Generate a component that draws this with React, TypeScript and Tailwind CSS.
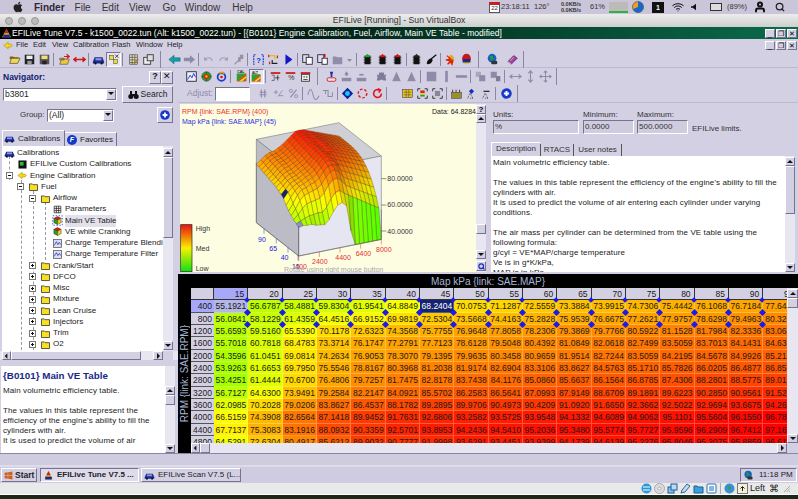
import type { ReactNode } from "react"
import { FaApple, FaWindows } from "react-icons/fa"
import { FiSearch, FiUser, FiWifi } from "react-icons/fi"

const bevel = "border border-t-white border-l-white border-r-[#77738f] border-b-[#77738f] bg-[#d4d0e4]"
const sunken = "border border-t-[#77738f] border-l-[#77738f] border-r-white border-b-white"

const grid = <path d="M3 3h9v9H3z M3 6h9 M3 9h9 M6 3v9 M9 3v9" fill="#fff" stroke="#222" />
const chip = (c: string) => (
  <>
    <rect x="4" y="3" width="7" height="10" fill="#111" />
    <path d="M3 5h1M3 8h1M3 11h1M11 5h1M11 8h1M11 11h1" stroke="#333" />
    <path d="M7.500 1l3.500 4h-7z" fill={c} />
  </>
)

const icons: Record<string, ReactNode> = {
  open: <><path d="M2 4h4l1 1h5v2H2z" fill="#8a6a10" /><path d="M2 12l2-6h10l-3 6z" fill="#f2d84a" stroke="#333" strokeWidth=".7" /></>,
  save: <><rect x="2" y="2" width="11" height="11" fill="#222" /><rect x="4" y="3" width="7" height="4" fill="#eee" /><rect x="5" y="9" width="5" height="4" fill="#999" /></>,
  saveall: <><rect x="2" y="2" width="11" height="11" fill="#555" /><rect x="4" y="3" width="7" height="4" fill="#f4e070" /><rect x="5" y="9" width="5" height="4" fill="#222" /></>,
  folderx: <><path d="M2 13l2-6h9l-2 6z M2 6h5v2H2z" fill="#ecc83a" stroke="#333" strokeWidth=".6" /><path d="M7 4h6M10 1.500l3 2.500-3 2.500" stroke="#d01818" fill="none" strokeWidth="1.300" /></>,
  arrows: <path d="M1 7.500h13M4 5l-3 2.500L4 10M11 5l3 2.500-3 2.500" stroke="#d01818" fill="none" strokeWidth="1.800" />,
  car: <><path d="M1 10l2-5h9l2 5v2H1z" fill="#1a2a90" /><rect x="4" y="6" width="7" height="2.500" fill="#8898e0" /><circle cx="4" cy="12" r="1.300" fill="#111" /><circle cx="11" cy="12" r="1.300" fill="#111" /></>,
  picks: <><rect x="2" y="3" width="5" height="5" fill="#ecd93a" stroke="#333" strokeWidth=".6" /><rect x="7" y="8" width="5" height="5" fill="#ecd93a" stroke="#333" strokeWidth=".6" /><path d="M9 2l4 4M13 2l-4 4" stroke="#222" /></>,
  tablepen: <><path d="M3 2h9v11H3z M3 5h9 M3 8h9 M3 11h9 M6 2v11 M9 2v11" fill="#e8e8c0" stroke="#333" strokeWidth=".7" /><path d="M8 12l5-5" stroke="#c07010" strokeWidth="1.400" /></>,
  windows: <><rect x="2" y="5" width="8" height="8" fill="#eee" stroke="#333" /><rect x="6" y="2" width="7" height="7" fill="#ddd" stroke="#333" /></>,
  left: <path d="M1 7.500L7 2.500v3h7v4H7v3z" fill="#12a0a8" stroke="#0a5058" strokeWidth=".5" />,
  right: <path d="M14 7.500L8 2.500v3H1v4h7v3z" fill="#8e8aa8" />,
  undo: <path d="M3 5v3h3M3 8c2-3 7-4 9 1" fill="none" stroke="#a09cb8" strokeWidth="1.300" />,
  redo: <path d="M12 5v3H9M12 8c-2-3-7-4-9 1" fill="none" stroke="#a09cb8" strokeWidth="1.300" />,
  wrench: <path d="M2 13l5-5V5h2V2h4v5h-3v3H7l-3 3z" fill="#96929f" />,
  help: <><path d="M4 2H2v11h2M11 2h2v11h-2" fill="none" stroke="#1030d0" strokeDasharray="2 1" strokeWidth="1.300" /><text x="5" y="11" fontSize="9" fontWeight="700" fill="#1030d0">?</text></>,
  sync: <><path d="M3 3h6v4" fill="none" stroke="#e0c010" strokeWidth="1.500" /><path d="M12 12H6V8" fill="none" stroke="#202020" strokeWidth="1.300" /><path d="M2 2v3M12 3v3M3 10v3" stroke="#e01818" strokeWidth="1.500" /></>,
  play: <path d="M4 1.500l8 6-8 6z" fill="#1414c8" />,
  copy: <><rect x="2" y="2" width="7" height="9" fill="#dde" stroke="#223" /><rect x="6" y="5" width="7" height="8" fill="#fff" stroke="#223" /></>,
  copyred: <><rect x="2" y="2" width="7" height="9" fill="#dde" stroke="#223" /><rect x="7" y="6" width="6" height="7" fill="#fff" stroke="#223" /><path d="M10 1v4" stroke="#d01818" strokeWidth="2" /></>,
  paste: <path d="M2 4h4l1 1h6v8H2z" fill="#918da8" />,
  chipg: chip("#10b020"),
  chipr: chip("#e01010"),
  chipk: chip("#222"),
  guitar: <><path d="M7 7l6-5" stroke="#111" strokeWidth="1.500" /><path d="M2 12c0-3 2-5 5-6l2 2c-1 3-3 5-6 5z" fill="#111" /></>,
  star: <><path d="M7 2a6 6 0 0 1 0 11 6 6 0 0 1 0-11" fill="#e8a820" /><path d="M2 3l5 4-6 1 6 1-4 4 5-4 0 5 1-6" stroke="#d82010" fill="none" strokeWidth="1.400" /></>,
  carred: <><circle cx="7.500" cy="6" r="5" fill="#c81818" /><path d="M3 7h9v4H3z" fill="#1a2a90" /><path d="M4 12h7" stroke="#e8c820" strokeWidth="1.500" /></>,
  globe: <><circle cx="7" cy="6" r="5" fill="#1860c0" /><path d="M4 3l4 1 1 3-3 2z" fill="#20a030" /><rect x="6" y="9" width="7" height="4" rx="1.500" fill="#333" /></>,
  book: <><path d="M2 10l7-7 4 3-7 7z" fill="#a040b0" stroke="#401850" strokeWidth=".7" /><path d="M5 9l4-4" stroke="#f4d040" /><path d="M2 10l4 3" stroke="#eee" /></>,
  chart: <><rect x="2" y="2" width="11" height="11" fill="#eef" stroke="#222" /><path d="M3 11l3-5 2 3 2-5 2 4" stroke="#1030c0" fill="none" /></>,
  cube: <><circle cx="7.500" cy="7.500" r="5.500" fill="#2aa030" stroke="#222" strokeWidth=".5" /><path d="M7.500 2v11M2 7.500h11" stroke="#222" strokeWidth=".5" /><circle cx="7.500" cy="7.500" r="3" fill="#e02010" /><circle cx="7.500" cy="7.500" r="1.300" fill="#f0d020" /></>,
  ring: <><circle cx="7.500" cy="8" r="4.500" fill="none" stroke="#1840d0" strokeWidth="2" /><path d="M5 4a4.500 4.500 0 0 1 6 0" fill="none" stroke="#e8a010" strokeWidth="2" /><circle cx="7.500" cy="8" r="1.500" fill="#d01818" /></>,
  cal: <><rect x="2" y="4" width="11" height="9" fill="#30a030" /><path d="M2 13L13 4v9z" fill="#e05010" /><path d="M5 13L13 7v2l-5 4z" fill="#f0e030" /><text x="2.500" y="3.800" fontSize="4" fontWeight="700" fill="#222">CAL</text></>,
  alt: <><rect x="2" y="4" width="11" height="9" fill="#30a030" /><path d="M2 13L13 4v9z" fill="#e05010" /><path d="M5 13L13 7v2l-5 4z" fill="#f0e030" /><text x="2.500" y="3.800" fontSize="4" fontWeight="700" fill="#222">ALT</text></>,
  pm: <><rect x="2" y="2.500" width="11" height="2" fill="#c81818" /><path d="M3 6h3v6H3" stroke="#444" fill="none" strokeWidth=".8" /><path d="M7 9h5M10 6v6" stroke="#333" /></>,
  pc: <><rect x="2" y="2.500" width="11" height="2" fill="#c81818" /><text x="5" y="12" fontSize="8" fill="#333">%</text></>,
  calc: <><rect x="2" y="2.500" width="11" height="2" fill="#c81818" /><rect x="3" y="5" width="9" height="8" fill="#eee" stroke="#333" /><path d="M5 8h2M9 7v2M5 11h5" stroke="#333" /></>,
  anvil: <><path d="M5.500 2h4l-1 3.500v2.500h-2V5.500z" fill="#2030b0" /><rect x="2.500" y="9" width="10" height="4" rx="1.500" fill="#f0e0e0" stroke="#c81818" /></>,
  upbar: <><rect x="2" y="9" width="11" height="4" fill="#8e8aa8" /><path d="M7.500 2v5M5.500 4.500h4" stroke="#8e8aa8" strokeWidth="2" /></>,
  downbar: <><rect x="2" y="9" width="11" height="4" fill="#8e8aa8" /><path d="M5 5.500h5" stroke="#8e8aa8" strokeWidth="2" /></>,
  bug: <path d="M5 3h5l1 3 2-1-1 3 1 4h-3l-2.500-1L5 12H2l1-4-1-3 2 1z" fill="#7e7a98" />,
  tri: <path d="M7.500 2l5 11h-10z" fill="#8e8aa8" />,
  square: <rect x="2" y="2" width="11" height="11" fill="#8e8aa8" />,
  vbar: <rect x="6" y="1" width="3" height="13" fill="#8e8aa8" />,
  hbar: <rect x="1" y="6" width="13" height="3" fill="#8e8aa8" />,
  stack1: <><rect x="2" y="2" width="6" height="6" fill="#aaa6c0" /><rect x="6" y="6" width="7" height="7" fill="#8e8aa8" /></>,
  stack2: <><rect x="2" y="2" width="7" height="7" fill="#8e8aa8" /><rect x="8" y="7" width="5" height="6" fill="#7e7a98" /></>,
  ew: <path d="M1 7.500h13M4 5l-3 2.500L4 10M11 5l3 2.500-3 2.500" stroke="#8e8aa8" fill="none" strokeWidth="1.300" />,
  ns: <path d="M7.500 1v13M5 4l2.500-3L10 4M5 11l2.500 3 2.500-3" stroke="#8e8aa8" fill="none" strokeWidth="1.300" />,
  move: <path d="M1 7.500h13M7.500 1v13M3 5.500l-2 2 2 2M12 5.500l2 2-2 2M5.500 3l2-2 2 2M5.500 12l2 2 2-2" stroke="#8e8aa8" fill="none" strokeWidth="1.200" />,
  hash: <path d="M5 3v9M9 3v9M3 6h8M3 9h8" stroke="#8e8aa8" strokeWidth="1.300" />,
  plusminus: <><path d="M2 6h5M4.500 3.500v5" stroke="#8e8aa8" /><path d="M8 10h5M7 11l5-7" stroke="#8e8aa8" /></>,
  percent: <><path d="M11 3l-7 9" stroke="#8e8aa8" strokeWidth="1.300" /><circle cx="4.500" cy="4.500" r="1.800" fill="none" stroke="#8e8aa8" /><circle cx="10.500" cy="10.500" r="1.800" fill="none" stroke="#8e8aa8" /></>,
  wave: <path d="M1 9c2-8 4-8 6 0s4 6 7 1" fill="none" stroke="#8e8aa8" strokeWidth="1.200" />,
  pulse: <path d="M1 4h6v7h5M4 4v4M12 11V6" fill="none" stroke="#8e8aa8" strokeWidth="1.200" />,
  target: <><path d="M7.500 1l6.500 6.500-6.500 6.500L1 7.500z" fill="#1020a0" /><circle cx="7.500" cy="7.500" r="2.800" fill="#18c8f0" /></>,
  dashc: <circle cx="7.500" cy="7.500" r="5" fill="none" stroke="#e01818" strokeWidth="1.600" strokeDasharray="3 2" />,
  refresh: <path d="M12 7.500a4.500 4.500 0 1 1-2-3.700M8 2l3 1.500-2 3" fill="none" stroke="#e01818" strokeWidth="1.800" />,
  gridc: <><rect x="2" y="3" width="11" height="9" fill="#e8c020" stroke="#333" strokeWidth=".6" /><path d="M3 6h9M3 9h9M6 3v9M9 3v9" stroke="#333" strokeWidth=".5" /></>,
  fr1: <><path d="M2 5V2h3M10 2h3v3M13 10v3h-3M5 13H2v-3" stroke="#222" fill="none" /><rect x="5" y="4" width="5" height="3" fill="#e02010" /><rect x="5" y="7" width="5" height="2" fill="#e8d020" /><rect x="5" y="9" width="5" height="2" fill="#20a030" /></>,
  fr2: <><path d="M2 5V2h3M10 2h3v3M13 10v3h-3M5 13H2v-3" stroke="#222" fill="none" /><rect x="4.500" y="4.500" width="6" height="6" fill="#889" /></>,
  tbl: <><path d="M3 3v3M7 3v3M11 3v3" stroke="#333" /><rect x="2" y="6" width="11" height="7" fill="#98902a" stroke="#333" strokeWidth=".6" /></>,
  pin1: <><path d="M3 13l3-6 3 6M9 13h-4" stroke="#333" fill="none" strokeDasharray="1 1" /><path d="M7.500 2l3 3-3 3-3-3z" fill="#1030c0" /></>,
  pin2: <><path d="M3 13l3-6 3 6M9 13h-4" stroke="#333" fill="none" strokeDasharray="1 1" /><path d="M4 5h7" stroke="#333" strokeWidth="1.500" /></>,
  plus: <><circle cx="7.500" cy="7.500" r="6" fill="#1438c8" /><path d="M4.500 7.500h6M7.500 4.500v6" stroke="#fff" strokeWidth="2.200" /></>,
  arrow: <path d="M1 7.500L7 3v2.500h4l2 2-2 2H7V12z" fill="#f4d818" stroke="#806010" strokeWidth=".5" />,
  folder: <><path d="M2 4h4l1 1h6v8H2z" fill="#f6e020" stroke="#222" /></>,
  wcube: <><path d="M7.500 2l5 2.500-5 2.500-5-2.500z" fill="#d81818" stroke="#222" strokeWidth=".5" /><path d="M2.500 4.500l5 2.500v6l-5-2.500z" fill="#20a020" stroke="#222" strokeWidth=".5" /><path d="M12.500 4.500l-5 2.500v6l5-2.500z" fill="#e8c810" stroke="#222" strokeWidth=".5" /></>,
  selcube: <><rect x="1" y="1" width="13" height="13" fill="none" stroke="#1030e0" strokeDasharray="2 2" /><path d="M7.500 2l5 2.500-5 2.500-5-2.500z" fill="#d81818" stroke="#222" strokeWidth=".5" /><path d="M2.500 4.500l5 2.500v6l-5-2.500z" fill="#20a020" stroke="#222" strokeWidth=".5" /><path d="M12.500 4.500l-5 2.500v6l5-2.500z" fill="#e8c810" stroke="#222" strokeWidth=".5" /></>,
  grid,
  curve: <><rect x="2" y="2" width="11" height="11" fill="#dde" stroke="#555" /><path d="M3 10l3-5 2 4 2-3 2 3" stroke="#1030c0" fill="none" /></>,
  cust: <><rect x="2" y="2" width="11" height="11" fill="#111" /><rect x="4" y="4" width="5" height="5" fill="#20c030" /></>,
  tune: <><path d="M7.500 1.500l6 11h-12z" fill="#e8c020" /><path d="M7.500 1.500l3 5.500H4.500z" fill="#c02020" /><path d="M3 9h9v4H3z" fill="#1a2a90" /></>,
}

function Ico({ n }: { n: string }) {
  return (
    <svg className="w-[13px] h-[13px] mx-[1px] shrink-0" viewBox="0 0 15 15">
      {icons[n]}
    </svg>
  )
}

// icon small enough for the tree rows
function Mini({ n }: { n: string }) {
  return (
    <svg className="w-[11px] h-[11px] shrink-0" viewBox="0 0 15 15">
      {icons[n]}
    </svg>
  )
}

function Tool({ items }: { items: string[] }) {
  return (
    <>
      {items.map((it, i) => {
        if (it === "|") return <span key={i} className="w-[4.500px] h-[13px] border-l border-[#8a86a4] translate-x-[1px] shrink-0" />
        if (it === "_") return <span key={i} className="w-[5px] shrink-0" />
        if (it === "||") return <span key={i} className="w-[11px] h-[17px] border-l border-[#8a86a4] translate-x-[4px] shrink-0" />
        if (it === "drop")
          return (
            <svg key={i} className="w-[10px] h-[15px] shrink-0" viewBox="0 0 10 15">
              <path d="M2 7h5l-2.500 3z" fill="#8e8aa8" />
            </svg>
          )
        if (it.startsWith("*"))
          return (
            <span key={i} className="w-[15px] h-[15px] shrink-0 bg-[#e8e6f0] border border-t-[#77738f] border-l-[#77738f] border-r-white border-b-white flex items-center justify-center">
              <svg className="w-[12px] h-[12px]" viewBox="0 0 15 15">{icons[it.slice(1)]}</svg>
            </span>
          )
        return <Ico key={i} n={it} />
      })}
    </>
  )
}

function Arrow({ dir }: { dir: "up" | "down" | "left" | "right" }) {
  const d = { up: "M1 5l3-3 3 3z", down: "M1 2l3 3 3-3z", left: "M5 1L2 4l3 3z", right: "M3 1l3 3-3 3z" }[dir]
  return (
    <svg className="w-[8px] h-[8px]" viewBox="0 0 8 8">
      <path d={d} fill="#111" />
    </svg>
  )
}

function Sb({ dir, className = "w-full h-[9px]" }: { dir: "up" | "down" | "left" | "right"; className?: string }) {
  return (
    <div className={`${bevel} ${className} shrink-0 flex items-center justify-center`}>
      <Arrow dir={dir} />
    </div>
  )
}

function WinBtns({ className = "" }: { className?: string }) {
  return (
    <div className={`flex gap-[1px] ${className}`}>
      {["_", "❐", "✕"].map((c) => (
        <span key={c} className={`${bevel} w-[10px] h-[9px] flex items-center justify-center text-[7px] leading-none text-black`}>
          {c}
        </span>
      ))}
    </div>
  )
}

function MacMenu() {
  return (
    <div className="h-[14px] shrink-0 bg-[#cbc5da] flex items-center text-[#2a2838] relative">
      <FaApple className="ml-[13px] w-[10px] h-[12px] text-[#222]" />
      <span className="ml-[11px] text-[10px] font-bold">Finder</span>
      <span className="ml-[10px] text-[10px] text-[#333]">File</span>
      <span className="ml-[11px] text-[10px] text-[#333]">Edit</span>
      <span className="ml-[10px] text-[10px] text-[#333]">View</span>
      <span className="ml-[12px] text-[10px] text-[#333]">Go</span>
      <span className="ml-[9px] text-[10px] text-[#333]">Window</span>
      <span className="ml-[12px] text-[10px] text-[#333]">Help</span>
      <div className="ml-auto mr-[13px] flex items-center text-[7.500px] text-[#333] whitespace-nowrap">
        <span className="w-[11px] h-[11px] bg-white border border-[#555] border-t-[3px] border-t-[#c82020] text-[6px] leading-none text-center">22</span>
        <span className="ml-[1px] w-[27px]">23:18:11</span>
        <span className="ml-[6px] w-[13px]">126°</span>
        <span className="ml-[14px] w-[22px] flex flex-col text-[5.500px] leading-[6px] font-bold">
          <span>0.0KB/s</span>
          <span>0.0KB/s</span>
        </span>
        <span className="ml-[7px] w-[12px]">61%</span>
        <span className="ml-[7px] w-[19px] h-[11px] bg-[#bdbbb8] border-b-2 border-[#30b040]" />
        <svg className="ml-[4px] w-[12px] h-[12px]" viewBox="0 0 12 12">
          <circle cx="6" cy="6" r="5.500" fill="#f0a020" stroke="#223" strokeWidth=".5" />
          <path d="M6 6V.5A5.500 5.500 0 0 1 6 11.500 5.500 5.500 0 0 1 1 8z" fill="#1868c8" />
        </svg>
        <span className="ml-[8px] w-[12px] h-[11px] bg-[#111] text-white text-[7px] font-bold leading-[11px] text-center">1</span>
        <FiWifi className="ml-[8px] w-[12px] h-[12px] text-[#111]" />
        <svg className="ml-[7px] w-[5px] h-[8px]" viewBox="0 0 6 8">
          <path d="M0 3h2l4-3v8L2 5H0z" fill="#111" />
        </svg>
        <span className="ml-[14px] w-[12px] h-[8px] border border-[#333] bg-[#ddd]" />
        <span className="ml-[5px] w-[19px]">(89%)</span>
        <FiUser className="ml-[8px] w-[12px] h-[12px] text-[#111]" strokeWidth={4} />
        <FiSearch className="ml-[9px] w-[10px] h-[10px] text-[#222]" strokeWidth={3} />
      </div>
    </div>
  )
}

function TitleBars() {
  return (
    <>
      <div className="h-[13px] shrink-0 bg-gradient-to-b from-[#ececec] to-[#cfcfcf] flex items-center relative">
        <div className="flex gap-[5px] ml-[5px]">
          <span className="w-[8px] h-[8px] rounded-full bg-[#bbb] border border-[#999]" />
          <span className="w-[8px] h-[8px] rounded-full bg-[#bbb] border border-[#999]" />
          <span className="w-[8px] h-[8px] rounded-full bg-[#bbb] border border-[#999]" />
        </div>
        <span className="absolute inset-x-0 text-center text-[8.600px] text-[#333]">EFILive [Running] - Sun VirtualBox</span>
      </div>
      <div className="h-[12px] shrink-0 bg-gradient-to-r from-black via-[#04301f] to-[#0b6c4c] flex items-center text-white text-[8.500px] tracking-[.03px] whitespace-nowrap">
        <span className="ml-[1px] w-[11px] flex"><Mini n="tune" /></span>
        <span>EFILive Tune V7.5 - k1500_0022.tun (Alt: k1500_0022.tun) - [{"{B0101}"} Engine Calibration, Fuel, Airflow, Main VE Table - modified]</span>
        <WinBtns className="ml-auto mr-[1px]" />
      </div>
      <div className="h-[12px] shrink-0 bg-[#d4d0e4] flex items-center text-[7.500px] text-[#222] whitespace-nowrap">
        <span className="ml-[3px] flex w-[11px]"><Mini n="arrow" /></span>
        <span className="ml-[2px] w-[12px]">File</span>
        <span className="ml-[5px] w-[13px]">Edit</span>
        <span className="ml-[6px] w-[15px]">View</span>
        <span className="ml-[6px] w-[32px]">Calibration</span>
        <span className="ml-[7px] w-[17px]">Flash</span>
        <span className="ml-[7px] w-[27px]">Window</span>
        <span className="ml-[4px]">Help</span>
        <WinBtns className="ml-auto mr-[1px]" />
      </div>
    </>
  )
}

const treeRows: [number, string, string, ("+" | "-")?][] = [
  [0, "car", "Calibrations"],
  [1, "cust", "EFILive Custom Calibrations"],
  [1, "arrow", "Engine Calibration", "-"],
  [2, "folder", "Fuel", "-"],
  [3, "folder", "Airflow", "-"],
  [4, "grid", "Parameters"],
  [4, "selcube", "Main VE Table"],
  [4, "wcube", "VE while Cranking"],
  [4, "curve", "Charge Temperature Blendi"],
  [4, "curve", "Charge Temperature Filter"],
  [3, "folder", "Crank/Start", "+"],
  [3, "folder", "DFCO", "+"],
  [3, "folder", "Misc", "+"],
  [3, "folder", "Mixture", "+"],
  [3, "folder", "Lean Cruise", "+"],
  [3, "folder", "Injectors", "+"],
  [3, "folder", "Trim", "+"],
  [3, "folder", "O2", "+"],
]

const indent = ["pl-[2px]", "pl-[4px]", "pl-[15px]", "pl-[27px]", "pl-[39px]"]

function Tree() {
  return (
    <div className="h-[205px] flex relative">
      <div className="w-[161px] ml-[2px] bg-white relative overflow-hidden text-[8px] text-[#222] pt-[1.500px]">
        <span className="absolute left-[7px] top-[10px] h-[24px] border-l border-dashed border-[#9a98aa]" />
        <span className="absolute left-[19px] top-[34px] h-[170px] border-l border-dashed border-[#9a98aa]" />
        <span className="absolute left-[31px] top-[45px] h-[159px] border-l border-dashed border-[#9a98aa]" />
        <span className="absolute left-[43px] top-[56px] h-[58px] border-l border-dashed border-[#9a98aa]" />
        {treeRows.map(([lvl, ic, label, exp]) => (
          <div key={label} className={`h-[11.250px] flex items-center relative ${indent[lvl]}`}>
            {lvl > 0 && (
              <span className="w-[11px] flex items-center shrink-0">
                {exp && (
                  <svg className="w-[7px] h-[7px] relative" viewBox="0 0 7 7">
                    <rect x=".5" y=".5" width="6" height="6" fill="#fff" stroke="#777" />
                    <path d={exp === "+" ? "M2 3.500h3M3.500 2v3" : "M2 3.500h3"} stroke="#111" />
                  </svg>
                )}
              </span>
            )}
            <Mini n={ic} />
            <span className={`ml-[2px] whitespace-nowrap ${label === "Main VE Table" ? "bg-[#e2e0ea]" : ""}`}>{label}</span>
          </div>
        ))}
      </div>
      <div className="w-[10px] flex flex-col bg-[#e8e6f0] pt-[2px] pb-[1px]">
        <Sb dir="up" />
        <div className={`${bevel} h-[81px]`} />
        <div className="flex-1" />
        <Sb dir="down" />
      </div>
    </div>
  )
}

function LeftPanel() {
  return (
    <div className="w-[178px] shrink-0 flex flex-col text-[8px] text-[#333] whitespace-nowrap">
      <div className="h-[16px] mt-[1px] flex items-center">
        <span className="ml-[3px] font-bold text-[#102070] text-[8.500px]">Navigator:</span>
        <span className={`${bevel} ml-auto w-[12px] h-[13px] flex items-center justify-center text-[9px] font-bold text-[#111]`}>?</span>
        <span className={`${bevel} mr-[5px] w-[12px] h-[13px] flex items-center justify-center text-[9px] text-[#111]`}>✕</span>
      </div>
      <div className="h-[18px] flex items-center">
        <div className={`${sunken} ml-[3px] w-[114px] h-[13px] bg-white flex items-center pl-[1px] text-[8.500px] text-[#222]`}>
          b3801
          <span className={`${bevel} ml-auto w-[10px] h-[11px] flex items-center justify-center`}><Arrow dir="down" /></span>
        </div>
        <div className={`${bevel} ml-[5px] w-[51px] h-[17px] flex items-center justify-center gap-[2px] text-[8.500px] text-[#222]`}>
          <svg className="w-[11px] h-[11px]" viewBox="0 0 11 11">
            <circle cx="2.800" cy="7.500" r="2.500" fill="#111" />
            <circle cx="8.200" cy="7.500" r="2.500" fill="#111" />
            <path d="M2 2h2v4H2zM7 2h2v4H7zM4 5h3v2H4z" fill="#111" />
          </svg>
          Search
        </div>
      </div>
      <div className="h-[20px] mt-[2px] flex items-center">
        <span className="ml-[20px] w-[24px] text-[8px]">Group:</span>
        <div className={`${sunken} ml-[3px] w-[67px] h-[13px] bg-white flex items-center pl-[1px] text-[8.500px] text-[#222]`}>
          (All)
          <span className={`${bevel} ml-auto w-[10px] h-[11px] flex items-center justify-center`}><Arrow dir="down" /></span>
        </div>
        <span className={`${bevel} ml-[43px] w-[16px] h-[16px] flex items-center justify-center`}>
          <svg className="w-[12px] h-[12px]" viewBox="0 0 15 15">{icons.plus}</svg>
        </span>
      </div>
      <div className="h-[17px] mt-[4px] flex items-end pl-[2px] text-[8px] text-[#222]">
        <div className="w-[63px] h-[16px] bg-[#d4d0e4] border-t border-l border-r border-t-white border-l-white border-r-[#77738f] flex items-center gap-[3px] pl-[1px]">
          <Mini n="car" />Calibrations
        </div>
        <div className="w-[52px] h-[14px] bg-[#d4d0e4] border-t border-r border-t-white border-r-[#77738f] flex items-center gap-[3px] pl-[2px]">
          <span className="w-[10px] h-[10px] rounded-full bg-[#1438c8] text-white text-[7px] font-bold leading-[10px] text-center italic">F</span>
          Favorites
        </div>
      </div>
      <Tree />
      <div className="h-[9px] flex pl-[2px] pr-[5px] bg-[#e8e6f0]">
        <Sb dir="left" className="w-[9px] h-full" />
        <div className={`${bevel} w-[130px]`} />
        <div className="flex-1" />
        <Sb dir="right" className="w-[10px] h-full" />
        <span className="w-[10px] bg-[#d4d0e4]" />
      </div>
      <div className="h-[6px]" />
      <div className="flex-1 ml-[1px] mr-[3px] bg-white flex min-h-0">
        <div className="flex-1 pl-[2px] text-[8px] tracking-[.1px] leading-[10px] text-[#222] overflow-hidden">
          <p className="text-[9.800px] font-bold text-[#182888] leading-[12px] mt-[4px] mb-[4px] tracking-[0]">{"{B0101}"} Main VE Table</p>
          <p>Main volumetric efficiency table.</p>
          <p className="h-[10px]" />
          <p>The values in this table represent the</p>
          <p>efficiency of the engine's ability to fill the</p>
          <p>cylinders with air.</p>
          <p>It is used to predict the volume of air</p>
        </div>
        <div className="w-[10px] flex flex-col bg-[#e8e6f0] pt-[20px]">
          <Sb dir="up" />
          <div className={`${bevel} h-[10px]`} />
          <div className="flex-1" />
          <Sb dir="down" />
        </div>
      </div>
    </div>
  )
}

const rpms = [400, 800, 1200, 1600, 2000, 2400, 2800, 3200, 3600, 4000, 4400, 4800]
const cols = [15, 20, 25, 30, 35, 40, 45, 50, 55, 60, 65, 70, 75, 80, 85, 90, 95]
const table = [
  [55.1921, 56.6787, 58.4881, 59.8304, 61.9541, 64.8849, 68.2404, 70.0753, 71.1287, 72.5559, 73.3884, 73.9915, 74.7306, 75.4442, 76.1068, 76.7184, 77.6442],
  [56.0841, 58.1229, 61.4359, 64.4516, 66.9152, 69.9819, 72.5304, 73.5668, 74.4163, 75.2828, 75.9539, 76.6675, 77.2621, 77.9757, 78.6298, 79.4963, 80.3203],
  [55.6593, 59.516, 65.539, 70.1178, 72.6323, 74.3568, 75.7755, 76.9648, 77.8058, 78.2306, 79.3869, 79.7766, 80.5922, 81.1528, 81.7984, 82.3336, 83.0641],
  [55.7018, 60.7818, 68.4783, 73.3714, 76.1747, 77.2791, 77.7123, 78.6128, 79.5048, 80.4392, 81.0849, 82.0618, 82.7499, 83.5059, 83.7013, 84.1431, 84.6391],
  [54.3596, 61.0451, 69.0814, 74.2634, 76.9053, 78.307, 79.1395, 79.9635, 80.3458, 80.9659, 81.9514, 82.7244, 83.5059, 84.2195, 84.5678, 84.9926, 85.2131],
  [53.9263, 61.6653, 69.795, 75.5546, 78.8167, 80.3968, 81.2038, 81.9174, 82.6904, 83.3106, 83.8627, 84.5763, 85.171, 85.7826, 86.0205, 86.4877, 86.8531],
  [53.4251, 61.4444, 70.67, 76.4806, 79.7257, 81.7475, 82.8178, 83.7438, 84.1176, 85.086, 85.6637, 86.1564, 86.8785, 87.4306, 88.2801, 88.5775, 89.0191],
  [56.7127, 64.63, 73.9491, 79.2584, 82.2147, 84.0921, 85.5702, 86.2583, 86.5641, 87.0993, 87.9149, 88.6709, 89.1891, 89.6223, 90.285, 90.9561, 91.5251],
  [62.0985, 70.2028, 79.0206, 83.8627, 86.4537, 88.1782, 89.2895, 89.9706, 90.4973, 90.4209, 91.092, 91.665, 92.3662, 92.5022, 92.9694, 93.6675, 94.2651],
  [66.5159, 74.3908, 82.6564, 87.1418, 89.9452, 91.7631, 92.6806, 93.2582, 93.5725, 93.9548, 94.1332, 94.6089, 94.9062, 95.1101, 95.5604, 96.155, 96.7831],
  [67.7137, 75.3083, 83.1916, 88.0932, 90.3359, 92.5701, 93.8953, 94.2436, 94.541, 95.2036, 95.348, 95.5774, 95.7727, 95.9596, 96.2909, 96.7412, 97.1651],
  [64.5291, 72.6304, 80.4917, 85.6212, 89.9032, 90.7777, 91.9998, 93.6291, 93.4451, 93.9399, 94.1739, 94.6139, 95.2276, 95.8046, 95.2075, 95.8859, 96.6101],
]

function heat(v: number, shade = 1) {
  const r = Math.min(1, Math.max(0, (v - 30) / 36))
  const g = Math.min(1, Math.max(0, (97 - v) / 31))
  return `rgb(${Math.round(255 * r * shade)},${Math.round(255 * g * shade)},0)`
}

// rows past 4800 rpm are off the visible table, so their shape comes from the plot
function surfaceValue(i: number, j: number) {
  if (i < 12) return j < 17 ? table[i][j] : table[i][16] + 0.5
  const t = (i - 11) / 8
  if (j === 0) return i === 12 ? 45 : 33.6
  const near = 72.6 + (56 - 72.6) * t
  const top = 97 + (87 - 97) * t
  const k = (j - 1) / 16
  return near + (top - near) * (1 - Math.pow(1 - k, 4))
}

function project(i: number, j: number) {
  const u = i / 19
  const v = j / 17
  return [362 + 248 * u - 127 * v, 465 - 50 * u - 100 * v - (surfaceValue(i, j) - 33.6) * 3.93]
}

function Surface() {
  const quads: ReactNode[] = []
  for (let i = 18; i >= 0; i--) {
    for (let j = 16; j >= 0; j--) {
      const pts = [project(i, j), project(i + 1, j), project(i + 1, j + 1), project(i, j + 1)]
      const val = (surfaceValue(i, j) + surfaceValue(i + 1, j) + surfaceValue(i + 1, j + 1) + surfaceValue(i, j + 1)) / 4
      const du = surfaceValue(i + 1, j) - surfaceValue(i, j)
      const shade = Math.max(0.88, Math.min(1, 1 + du * 0.04))
      let fill = heat(val - 3, shade)
      if (i === 0 && j === 6) fill = "#14246e"
      if (i === 0 && j === 0) fill = "#8c90d8"
      quads.push(
        <polygon
          key={`${i}-${j}`}
          points={pts.map((p) => p.join(",")).join(" ")}
          fill={fill}
          stroke="#3a2400"
          strokeOpacity=".65"
          strokeWidth="1.200"
        />,
      )
    }
  }
  return <>{quads}</>
}

function Chart() {
  const txt = { fontSize: 21, fontFamily: "Liberation Sans, sans-serif" }
  return (
    <svg className="w-[296px] h-[169px] shrink-0 bg-[#fdfde2]" viewBox="6 9 888 507">
      <defs>
        <linearGradient id="legend" x1="0" y1="0" x2="0" y2="1">
          <stop offset="0" stopColor="#e81010" />
          <stop offset=".5" stopColor="#f8f000" />
          <stop offset="1" stopColor="#10e010" />
        </linearGradient>
      </defs>
      <text x="12" y="39" fill="#ee3030" {...txt}>RPM {"{link: SAE.RPM}"} (400)</text>
      <text x="12" y="69" fill="#3030e0" {...txt}>Map kPa {"{link: SAE.MAP}"} (45)</text>
      <text x="762" y="39" fill="#222" {...txt}>Data: 64.8284</text>
      <polygon points="235,115 483,65 610,165 362,215" fill="#cfcfd6" stroke="#666" strokeWidth="1.500" />
      <polygon points="235,115 362,215 362,465 235,365" fill="#bcbcc6" stroke="#666" strokeWidth="1.500" />
      <polygon points="362,215 610,165 610,415 362,465" fill="#e6e6f2" stroke="#666" strokeWidth="1.500" />
      <Surface />
      <path d="M362 375v90l248-50V325M235 185V365l127 100" fill="none" stroke="#555" strokeWidth="1.500" />
      <path d="M610 233h15M610 312h15M610 390h15" stroke="#222" strokeWidth="1.500" />
      <text x="628" y="240" fill="#333" {...txt}>80.0000</text>
      <text x="628" y="319" fill="#333" {...txt}>60.0000</text>
      <text x="628" y="398" fill="#333" {...txt}>40.0000</text>
      <path d="M362 465v15M424 453v15M486 440v15M548 428v15M610 415v15" stroke="#e83030" strokeWidth="1.500" />
      <path d="M258 383l0 15M295 412l0 15M330 440l0 15M360 463l0 15" stroke="#3030e0" strokeWidth="1.500" />
      <text x="240" y="424" fill="#2020e0" {...txt}>90</text>
      <text x="274" y="451" fill="#2020e0" {...txt}>65</text>
      <text x="308" y="478" fill="#2020e0" {...txt}>40</text>
      <text x="342" y="503" fill="#2020e0" {...txt}>15</text>
      <text x="352" y="503" fill="#e83030" {...txt}>400</text>
      <text x="402" y="490" fill="#e83030" {...txt}>2400</text>
      <text x="472" y="477" fill="#e83030" {...txt}>4400</text>
      <text x="533" y="465" fill="#e83030" {...txt}>6400</text>
      <text x="594" y="452" fill="#e83030" {...txt}>8000</text>
      <text x="318" y="512" fill="#a8a8a8" {...txt}>Rotate using right mouse button</text>
      <rect x="8" y="371" width="34" height="141" fill="url(#legend)" stroke="#222" strokeWidth="2" />
      <text x="53" y="390" fill="#333" {...txt}>High</text>
      <text x="53" y="450" fill="#333" {...txt}>Med</text>
      <text x="53" y="510" fill="#333" {...txt}>Low</text>
    </svg>
  )
}

function ChartScroll() {
  return (
    <div className="w-[10px] shrink-0 flex flex-col bg-[#e8e6f0]">
      <span className={`${bevel} h-[9px] mt-[1px] shrink-0 flex items-center justify-center text-[8px] font-bold text-black`}>?</span>
      <Sb dir="up" />
      <div className="h-[100px]" />
      <div className={`${bevel} h-[10px] mt-[1px]`} />
      <div className="flex-1" />
      <Sb dir="down" />
      <span className={`${bevel} h-[10px] mt-[2px] mb-[1px] shrink-0 flex items-center justify-center`}>
        <FiSearch className="w-[7px] h-[7px] text-[#1030c0]" strokeWidth={4} />
      </span>
    </div>
  )
}

const descLines = [
  "Main volumetric efficiency table.",
  "",
  "The values in this table represent the efficiency of the engine's ability to fill the",
  "cylinders with air.",
  "It is used to predict the volume of air entering each cylinder under varying",
  "conditions.",
  "",
  "The air mass per cylinder can be determined from the VE table using the",
  "following formula:",
  "g/cyl = VE*MAP/charge temperature",
  "Ve is in g*K/kPa,",
  "MAP is in kPa",
]

function PropsPanel() {
  return (
    <div className="w-[309px] ml-[3px] shrink-0 flex flex-col text-[8px] text-[#333] whitespace-nowrap">
      <div className="flex mt-[5px] pl-[4px] h-[25px]">
        <div className="w-[86px]">
          <p className="h-[11px] leading-[11px]">Units:</p>
          <div className={`${sunken} h-[14px] bg-[#d0cce0] leading-[12px] pl-[1px]`}>%</div>
        </div>
        <div className="w-[51px] ml-[4px]">
          <p className="h-[11px] leading-[11px]">Minimum:</p>
          <div className={`${sunken} h-[14px] bg-[#d0cce0] leading-[12px] pl-[1px]`}>0.0000</div>
        </div>
        <div className="w-[51px] ml-[3px]">
          <p className="h-[11px] leading-[11px]">Maximum:</p>
          <div className={`${sunken} h-[14px] bg-[#d0cce0] leading-[12px] pl-[1px]`}>500.0000</div>
        </div>
        <p className="ml-[4px] mt-[14px] leading-[11px]">EFILive limits.</p>
      </div>
      <div className="flex items-end h-[14px] mt-[8px] ml-[2px] leading-[12px]">
        <span className="w-[49px] h-[14px] text-center bg-[#d4d0e4] border-t border-l border-t-white border-l-white">Description</span>
        <span className="w-[1px] h-[12px] bg-[#555]" />
        <span className="w-[32px] h-[12px] text-center">RTACS</span>
        <span className="w-[1px] h-[12px] bg-[#555]" />
        <span className="w-[47px] h-[12px] text-center">User notes</span>
        <span className="w-[1px] h-[12px] bg-[#555]" />
      </div>
      <div className="h-[117px] ml-[2px] mr-[3px] flex bg-white">
        <div className="flex-1 overflow-hidden pl-[2px] text-[8px] tracking-[.1px] text-[#222] leading-[9.970px] pt-[2px]">
          {descLines.map((l, i) => (
            <p key={i} className="h-[9.970px]">{l}</p>
          ))}
        </div>
        <div className="w-[10px] flex flex-col bg-[#e8e6f0] py-[1px]">
          <Sb dir="up" />
          <div className={`${bevel} h-[48px]`} />
          <div className="flex-1" />
          <Sb dir="down" />
        </div>
      </div>
    </div>
  )
}

function DataTable() {
  return (
    <div className="h-[155px] overflow-hidden">
      <div className="grid grid-cols-[23px_repeat(17,34.330px)] auto-rows-[12.330px] text-[8.500px] leading-[12px] text-right text-[#1a1a1a]">
        <div className="bg-[#d4d0e4] border-r border-b border-[#333]" />
        {cols.map((c, j) => (
          <div key={c} className={`border-r border-b border-[#333] pr-[3px] overflow-hidden ${j === 0 ? "bg-[#a8a8f8]" : "bg-[#d4d0e4]"}`}>
            {c}
          </div>
        ))}
        {rpms.map((rpm, i) => (
          <div key={rpm} className="contents">
            <div className={`border-b border-[#555] pr-[2px] ${i === 0 ? "bg-[#a8a8f8]" : "bg-[#d4d0e4]"}`}>{rpm}</div>
            {table[i].map((v, j) => {
              const active = i === 0 && j === 6
              const first = i === 0 && j === 0
              return (
                <div
                  key={j}
                  className={`relative border-r border-b border-[#ffffff40] pr-[1px] ${active ? "text-white" : ""} ${j === 16 ? "text-left pl-[2px]" : ""}`}
                  style={{ background: active ? "#14246e" : first ? "#b4b6e6" : heat(v) }}
                >
                  {v.toFixed(4)}
                  {i < 2 && (
                    <span className="absolute -right-[3px] -bottom-[3px] w-[5px] h-[5px] rotate-45 bg-[#1c1ce8] z-10" />
                  )}
                  {i === 0 && (
                    <span className="absolute -right-[2px] -top-[2px] w-[4px] h-[4px] rotate-45 bg-[#1c1ce8] z-10" />
                  )}
                </div>
              )
            })}
          </div>
        ))}
      </div>
    </div>
  )
}

function TableArea() {
  return (
    <div className="h-[181px] shrink-0 flex flex-col bg-black border-t-2 border-[#d4d0e4]">
      <div className="h-[14px] text-center text-[10px] leading-[15px] text-[#a8b4d4]">Map kPa {"{link: SAE.MAP}"}</div>
      <div className="flex flex-1 min-h-0">
        <div className="w-[13px] flex items-center justify-center">
          <span className="[writing-mode:vertical-rl] rotate-180 text-[10px] text-[#a8b4d4] whitespace-nowrap mt-[6px]">RPM {"{link: SAE.RPM}"}</span>
        </div>
        <div className="w-[596px] flex flex-col overflow-hidden">
          <DataTable />
          <div className="h-[10px] flex bg-[#e8e6f0]">
            <Sb dir="left" className="w-[9px] h-full" />
            <div className={`${bevel} w-[10px]`} />
            <div className="flex-1" />
            <Sb dir="right" className="w-[10px] h-full" />
          </div>
        </div>
        <div className="w-[11px] flex flex-col bg-[#e8e6f0]">
          <div className="h-[1px]" />
          <Sb dir="up" />
          <div className={`${bevel} h-[10px] shrink-0`} />
          <div className="h-[126px]" />
          <Sb dir="down" />
          <div className="flex-1 bg-[#d4d0e4]" />
        </div>
      </div>
    </div>
  )
}

function Toolbars() {
  return (
    <>
      <div className="h-[17px] flex items-center pl-[6px]">
        <Tool items={["chart", "cube", "ring", "|", "cal", "*alt", "|", "pm", "pc", "calc", "||", "anvil", "upbar", "downbar", "_", "bug", "tri", "tri", "|", "square", "vbar", "hbar", "|", "stack1", "stack2", "|", "ew", "ns", "move"]} />
        <span className="ml-[3px] h-[17px] border-r border-[#8a86a4]" />
      </div>
      <div className="h-[17px] flex items-center pl-[9px]">
        <span className="w-[25px] text-[8.500px] text-[#8e8aa8]">Adjust:</span>
        <span className={`${sunken} ml-[3px] w-[35px] h-[14px] bg-white shrink-0`} />
        <span className="w-[6px] shrink-0" />
        <Tool items={["hash", "plusminus", "percent", "|", "wave", "pulse", "|", "target", "dashc", "refresh", "|", "_", "_", "gridc", "fr1", "fr2", "|", "tbl", "pin1", "pin2", "|", "plus"]} />
        <span className="ml-[3px] h-[17px] border-r border-[#8a86a4]" />
      </div>
    </>
  )
}

function TaskBars() {
  return (
    <>
      <div className="h-[12px] shrink-0 border-t border-[#8a86a8] bg-[#d0cce0]" />
      <div className="h-[18px] shrink-0 bg-[#cfcbe0] border-t-2 border-[#dedbea] flex items-center text-[8px] text-[#222] whitespace-nowrap">
        <div className={`${bevel} ml-[1px] w-[36px] h-[14px] flex items-center gap-[2px] pl-[2px] font-bold text-[8.500px]`}>
          <FaWindows className="w-[9px] h-[9px] text-[#d06020]" />Start
        </div>
        <div className={`${sunken} ml-[3px] w-[99px] h-[14px] bg-[#dedbea] flex items-center gap-[3px] pl-[2px] font-bold`}>
          <Mini n="tune" />EFILive Tune V7.5 ...
        </div>
        <div className={`${bevel} ml-[2px] w-[100px] h-[14px] flex items-center gap-[3px] pl-[2px]`}>
          <Mini n="car" />EFILive Scan V7.5 (L...
        </div>
        <div className={`${sunken} ml-auto mr-[1px] w-[57px] h-[14px] flex items-center pl-[2px]`}>
          <Mini n="globe" />
          <span className="ml-[5px]">11:18 PM</span>
        </div>
      </div>
      <div className="h-[12px] shrink-0 bg-[#e9e9e9] border-b border-[#fff] flex items-center justify-end pr-[7px] text-[9px] text-[#222]">
        <svg className="w-[11px] h-[11px]" viewBox="0 0 11 11"><ellipse cx="5.500" cy="5.500" rx="5" ry="5" fill="#2a98d8" /><path d="M2 4h7M2 7h7" stroke="#fff" /></svg>
        <svg className="ml-[2px] w-[11px] h-[11px]" viewBox="0 0 11 11"><circle cx="5.500" cy="5.500" r="5" fill="#dcdcdc" stroke="#aaa" /><circle cx="5.500" cy="5.500" r="1.500" fill="#fff" stroke="#aaa" /></svg>
        <svg className="ml-[2px] w-[11px] h-[11px]" viewBox="0 0 11 11"><rect x="1" y="4" width="6" height="6" fill="#8cc0ec" stroke="#1c5c98" /><rect x="4" y="1" width="6" height="6" fill="#bcdcf4" stroke="#1c5c98" /></svg>
        <svg className="ml-[2px] w-[11px] h-[11px]" viewBox="0 0 11 11"><path d="M1 10l1-3 5-6 3 2-5 6z" fill="#c0d8ec" stroke="#36689a" /></svg>
        <svg className="ml-[2px] w-[11px] h-[11px]" viewBox="0 0 11 11"><path d="M1 3h3l1 1h5v6H1z" fill="#38a0dc" stroke="#1c5c98" /></svg>
        <svg className="ml-[2px] w-[11px] h-[11px]" viewBox="0 0 11 11"><rect x="1" y="1" width="9" height="9" rx="1" fill="#fff" stroke="#2870b0" /><path d="M3 3h5v5H3z" fill="#88b4e0" /></svg>
        <span className="mx-[3px] h-[11px] border-l border-[#aaa]" />
        <svg className="w-[11px] h-[11px]" viewBox="0 0 11 11"><circle cx="5.500" cy="5.500" r="5" fill="#3890d8" /><path d="M3 3l4 1-1 4z" fill="#30a040" /></svg>
        <svg className="ml-[2px] w-[11px] h-[11px]" viewBox="0 0 11 11"><rect x=".5" y=".5" width="10" height="10" fill="#f4f0d8" stroke="#777" /><path d="M5.500 8V4M3.500 5.500l2-2 2 2" stroke="#222" fill="none" /></svg>
        <span className="ml-[2px]">Left</span>
        <span className="ml-[4px] text-[10px]">⌘</span>
        <svg className="ml-[4px] w-[8px] h-[8px]" viewBox="0 0 8 8"><path d="M7 1L1 7M7 3.500L3.500 7M7 6L6 7" stroke="#aaa" /></svg>
      </div>
      <div className="flex-1 bg-[#18281a]" />
    </>
  )
}

export default function App() {
  return (
    <div className="w-[798px] h-[499px] overflow-hidden flex flex-col bg-[#d4d0e4] font-['Liberation_Sans',sans-serif]">
      <MacMenu />
      <TitleBars />
      <div className="h-[17px] shrink-0 flex items-center pl-[7px] border-b border-[#bdb9d0]">
        <Tool
          items={[
            "open", "save", "saveall", "|", "folderx", "arrows", "|", "car", "*picks", "|", "tablepen", "windows",
            "||", "left", "right", "|", "undo", "redo", "wrench", "|", "help", "sync", "play", "|", "copy", "copyred", "paste", "drop", "|",
            "chipg", "chipr", "chipr", "|", "chipk", "guitar", "|", "star", "carred", "||", "globe", "_", "book",
          ]}
        />
        <span className="ml-[3px] h-[17px] border-r border-[#8a86a4]" />
      </div>
      <div className="flex h-[385px] shrink-0">
        <LeftPanel />
        <div className="flex-1 flex flex-col min-w-0">
          <Toolbars />
          <div className="flex h-[170px] shrink-0 pl-[2px] pt-[1px] border-t border-[#bdb9d0]">
            <Chart />
            <ChartScroll />
            <PropsPanel />
          </div>
          <TableArea />
        </div>
      </div>
      <TaskBars />
    </div>
  )
}
